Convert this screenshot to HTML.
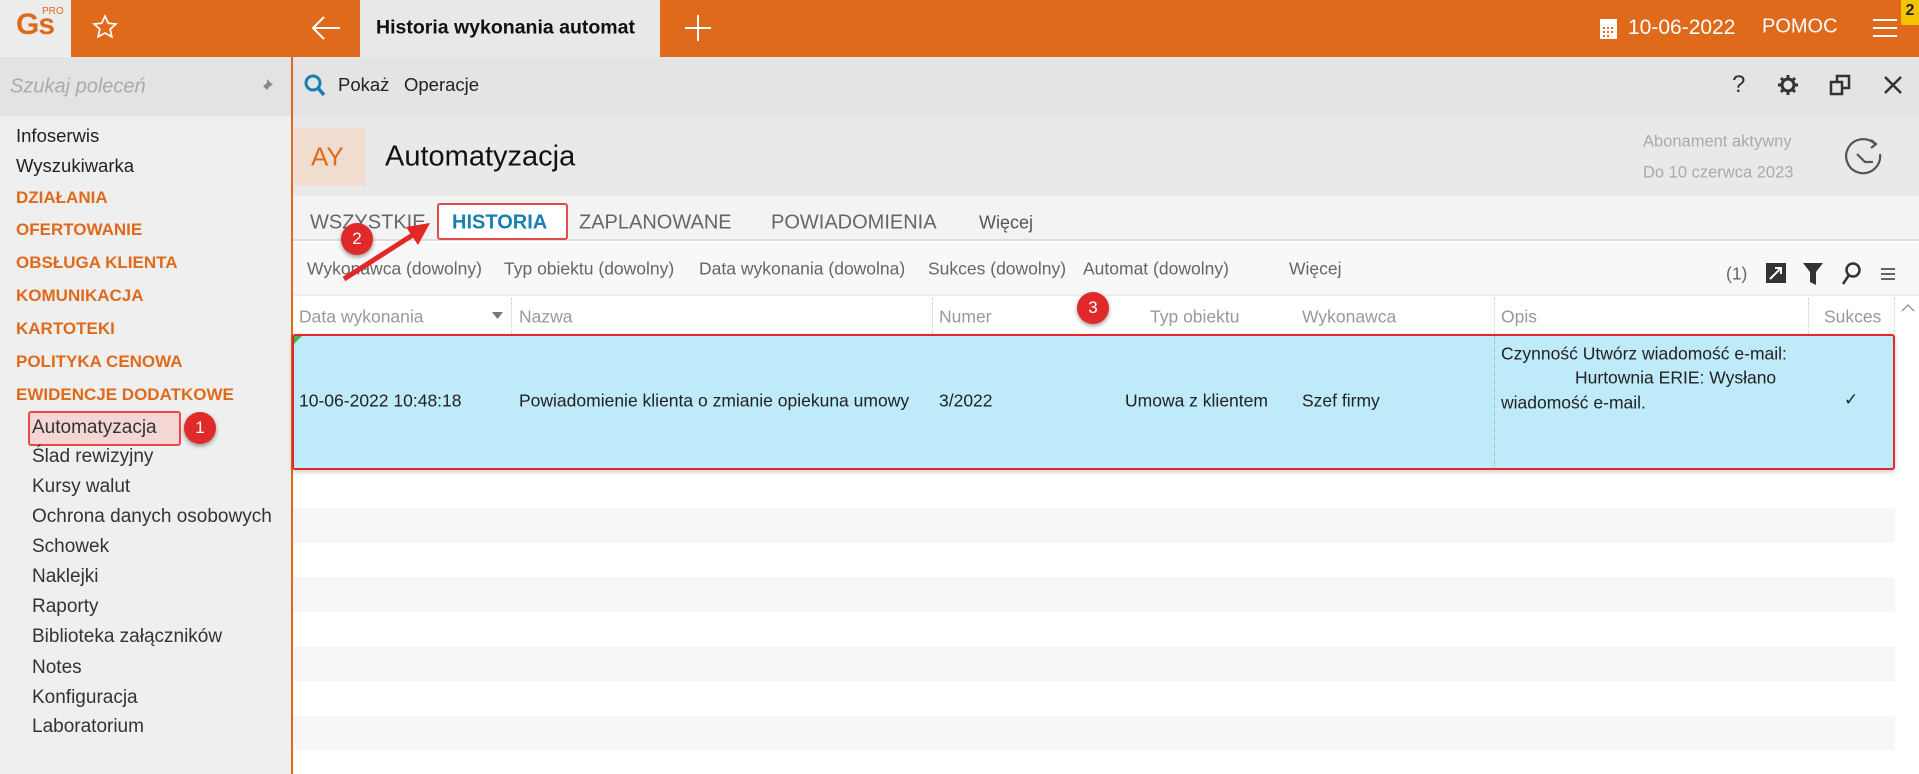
<!DOCTYPE html>
<html><head><meta charset="utf-8"><style>
*{margin:0;padding:0;box-sizing:border-box}
body{width:1919px;height:774px;overflow:hidden;position:relative;font-family:"Liberation Sans",sans-serif;background:#fff;color:#222}
.a{position:absolute;white-space:nowrap}
.t{transform:translateY(-50%)}
.side{font-size:18.5px;left:16px}
.or{color:#e06a1b;font-weight:bold}
.sub{left:32px;font-size:19px;color:#333}
.fl{font-size:17.5px;color:#666}
.th{font-size:17.5px;color:#999}
.badge{position:absolute;width:32px;height:32px;border-radius:50%;background:#e02a2a;color:#fff;font-size:17px;text-align:center;line-height:32px;box-shadow:0 2px 4px rgba(0,0,0,.4)}
</style></head><body>
<div class="a" style="left:0;top:0;width:71px;height:57px;background:#ececec"></div>
<div class="a" style="left:16px;top:8px;font-size:30px;font-weight:bold;color:#e06a1b;letter-spacing:-1px">Gs</div>
<div class="a" style="left:42px;top:6px;font-size:10px;color:#e06a1b">PRO</div>
<div class="a" style="left:71px;top:0;width:289px;height:57px;background:#e06a1b"></div>
<div class="a" style="left:360px;top:0;width:300px;height:57px;background:#e8e8e8"></div>
<div class="a" style="left:660px;top:0;width:1259px;height:57px;background:#e06a1b"></div>
<svg class="a" style="left:92px;top:14px" width="26" height="26" viewBox="0 0 24 24"><path d="M12 2l3 6.5 7 .8-5.2 4.8 1.5 7L12 17.5 5.7 21l1.5-7L2 9.3l7-.8z" fill="none" stroke="#fff" stroke-width="1.6"/></svg>
<svg class="a" style="left:310px;top:14px" width="32" height="28" viewBox="0 0 32 28"><path d="M30 14H3M14 3L3 14l11 11" fill="none" stroke="#fff" stroke-width="2"/></svg>
<div class="a t" style="left:376px;top:28px;font-size:19.5px;font-weight:bold;color:#111">Historia wykonania automat</div>
<svg class="a" style="left:685px;top:15px" width="26" height="26"><path d="M13 0v26M0 13h26" stroke="#fff" stroke-width="2"/></svg>
<svg class="a" style="left:1600px;top:19px" width="17" height="20"><rect x="0" y="2" width="17" height="18" fill="#fff"/><rect x="0" y="0" width="17" height="5" fill="#fff"/><g fill="#e06a1b"><rect x="3" y="8" width="2" height="2"/><rect x="7" y="8" width="2" height="2"/><rect x="11" y="8" width="2" height="2"/><rect x="3" y="12" width="2" height="2"/><rect x="7" y="12" width="2" height="2"/><rect x="11" y="12" width="2" height="2"/><rect x="3" y="16" width="2" height="2"/><rect x="7" y="16" width="2" height="2"/></g></svg>
<div class="a t" style="left:1628px;top:28px;font-size:21px;color:#fff">10-06-2022</div>
<div class="a t" style="left:1762px;top:27px;font-size:20px;color:#fff">POMOC</div>
<svg class="a" style="left:1873px;top:18px" width="24" height="20"><path d="M0 2h24M0 10h24M0 18h24" stroke="#fff" stroke-width="2"/></svg>
<div class="a" style="left:1901px;top:0;width:18px;height:25px;background:#f5c400;font-size:16px;font-weight:bold;text-align:center;line-height:22px">2</div>
<div class="a" style="left:0;top:57px;width:291px;height:717px;background:#efefef"></div>
<div class="a" style="left:0;top:57px;width:291px;height:59px;background:#e3e3e3"></div>
<div class="a t" style="left:10px;top:87px;font-size:20px;font-style:italic;color:#aaa">Szukaj poleceń</div>
<svg class="a" style="left:258px;top:78px" width="16" height="18" viewBox="0 0 16 18"><path d="M9 1l6 6-3 1-3 4-2-2-5 6 5-6-2-2 4-3z" fill="#888"/></svg>
<div class="a" style="left:291px;top:57px;width:2px;height:717px;background:#e06a1b"></div>
<div class="a t side" style="top:136px">Infoserwis</div>
<div class="a t side" style="top:166px">Wyszukiwarka</div>
<div class="a t side or" style="top:198px;font-size:17px">DZIAŁANIA</div>
<div class="a t side or" style="top:230px;font-size:17px">OFERTOWANIE</div>
<div class="a t side or" style="top:263px;font-size:17px">OBSŁUGA KLIENTA</div>
<div class="a t side or" style="top:296px;font-size:17px">KOMUNIKACJA</div>
<div class="a t side or" style="top:329px;font-size:17px">KARTOTEKI</div>
<div class="a t side or" style="top:362px;font-size:17px">POLITYKA CENOWA</div>
<div class="a t side or" style="top:395px;font-size:17px">EWIDENCJE DODATKOWE</div>
<div class="a" style="left:28px;top:411px;width:153px;height:35px;background:#f4d6d4;border:2px solid #e34a4a;border-radius:3px"></div>
<div class="a t sub" style="top:428px">Automatyzacja</div>
<div class="a t sub" style="top:457px">Ślad rewizyjny</div>
<div class="a t sub" style="top:487px">Kursy walut</div>
<div class="a t sub" style="top:517px">Ochrona danych osobowych</div>
<div class="a t sub" style="top:547px">Schowek</div>
<div class="a t sub" style="top:577px">Naklejki</div>
<div class="a t sub" style="top:607px">Raporty</div>
<div class="a t sub" style="top:637px">Biblioteka załączników</div>
<div class="a t sub" style="top:668px">Notes</div>
<div class="a t sub" style="top:698px">Konfiguracja</div>
<div class="a t sub" style="top:727px">Laboratorium</div>
<div class="badge" style="left:184px;top:412px">1</div>
<div class="a" style="left:293px;top:57px;width:1626px;height:59px;background:#e4e4e4"></div>
<svg class="a" style="left:304px;top:74px" width="22" height="24"><circle cx="9" cy="9" r="7" fill="none" stroke="#1a7fb0" stroke-width="3"/><path d="M14 14l6 7" stroke="#1a7fb0" stroke-width="3.5"/></svg>
<div class="a t" style="left:338px;top:85px;font-size:18.5px">Pokaż</div>
<div class="a t" style="left:404px;top:85px;font-size:18.5px">Operacje</div>
<div class="a t" style="left:1732px;top:85px;font-size:24px;color:#333">?</div>
<svg class="a" style="left:1777px;top:74px" width="22" height="22" viewBox="0 0 22 22"><circle cx="11" cy="11" r="6" fill="none" stroke="#333" stroke-width="3"/><path d="M11 1v5M11 16v5M1 11h5M16 11h5M4 4l3.5 3.5M14.5 14.5L18 18M4 18l3.5-3.5M14.5 7.5L18 4" stroke="#333" stroke-width="3"/></svg>
<svg class="a" style="left:1829px;top:74px" width="22" height="22"><rect x="2" y="8" width="11" height="12" fill="none" stroke="#333" stroke-width="2.5"/><path d="M8 8V2h12v12h-7" fill="none" stroke="#333" stroke-width="2.5"/></svg>
<svg class="a" style="left:1883px;top:75px" width="20" height="20"><path d="M2 2l16 16M18 2L2 18" stroke="#333" stroke-width="2.5"/></svg>
<div class="a" style="left:293px;top:116px;width:1626px;height:80px;background:#e9e9e9"></div>
<div class="a" style="left:294px;top:128px;width:71px;height:58px;background:#f1ddd0"></div>
<div class="a t" style="left:311px;top:157px;font-size:26px;color:#e06a1b">AY</div>
<div class="a t" style="left:385px;top:157px;font-size:29px;color:#111">Automatyzacja</div>
<div class="a t" style="left:1643px;top:142px;font-size:16.5px;color:#aaa">Abonament aktywny</div>
<div class="a t" style="left:1643px;top:173px;font-size:16.5px;color:#aaa">Do 10 czerwca 2023</div>
<svg class="a" style="left:1843px;top:136px" width="42" height="42" viewBox="0 0 42 42"><path d="M32 8A17 17 0 1 0 37 18" fill="none" stroke="#555" stroke-width="2.2"/><path d="M28 4l5 4-5 4" fill="none" stroke="#555" stroke-width="2.2"/><path d="M14 18l8 8h8" fill="none" stroke="#555" stroke-width="2.2"/></svg>
<div class="a" style="left:293px;top:196px;width:1626px;height:45px;background:#f3f3f3;border-bottom:2px solid #dcdcdc"></div>
<div class="a t" style="left:310px;top:223px;font-size:20px;color:#666">WSZYSTKIE</div>
<div class="a" style="left:437px;top:203px;width:131px;height:37px;border:2px solid #e34a4a;border-radius:3px;background:#fff"></div>
<div class="a t" style="left:452px;top:223px;font-size:20px;font-weight:bold;color:#1a7fb0">HISTORIA</div>
<div class="a t" style="left:579px;top:223px;font-size:20px;color:#666">ZAPLANOWANE</div>
<div class="a t" style="left:771px;top:223px;font-size:20px;color:#666">POWIADOMIENIA</div>
<div class="a t" style="left:979px;top:223px;font-size:18px;color:#555">Więcej</div>
<div class="a" style="left:293px;top:243px;width:1626px;height:53px;background:#f8f8f8;border-bottom:2px solid #eee"></div>
<div class="a t fl" style="left:307px;top:269px">Wykonawca (dowolny)</div>
<div class="a t fl" style="left:504px;top:269px">Typ obiektu (dowolny)</div>
<div class="a t fl" style="left:699px;top:269px">Data wykonania (dowolna)</div>
<div class="a t fl" style="left:928px;top:269px">Sukces (dowolny)</div>
<div class="a t fl" style="left:1083px;top:269px">Automat (dowolny)</div>
<div class="a t fl" style="left:1289px;top:269px">Więcej</div>
<div class="a t fl" style="left:1726px;top:274px">(1)</div>
<svg class="a" style="left:1766px;top:263px" width="20" height="20"><rect width="20" height="20" fill="#333"/><path d="M4 16L15 5M9 5h6v6" stroke="#fff" stroke-width="2" fill="none"/></svg>
<svg class="a" style="left:1803px;top:263px" width="20" height="22"><path d="M0 0h20l-7 9v13l-6-3V9z" fill="#333"/></svg>
<svg class="a" style="left:1841px;top:262px" width="20" height="24"><circle cx="12" cy="8" r="6.5" fill="none" stroke="#333" stroke-width="2.5"/><path d="M8 13l-6 9" stroke="#333" stroke-width="2.5"/></svg>
<svg class="a" style="left:1881px;top:268px" width="14" height="12"><path d="M0 1h14M0 6h14M0 11h14" stroke="#333" stroke-width="1.6"/></svg>
<div class="a th t" style="left:299px;top:317px">Data wykonania</div>
<svg class="a" style="left:492px;top:312px" width="11" height="8"><path d="M0 0h11L5.5 7z" fill="#777"/></svg>
<div class="a" style="left:511px;top:298px;height:36px;border-left:1px dotted #ccc"></div>
<div class="a th t" style="left:519px;top:317px">Nazwa</div>
<div class="a" style="left:932px;top:298px;height:36px;border-left:1px dotted #ccc"></div>
<div class="a th t" style="left:939px;top:317px">Numer</div>
<div class="a th t" style="left:1150px;top:317px">Typ obiektu</div>
<div class="a th t" style="left:1302px;top:317px">Wykonawca</div>
<div class="a" style="left:1494px;top:298px;height:36px;border-left:1px dotted #ccc"></div>
<div class="a th t" style="left:1501px;top:317px">Opis</div>
<div class="a" style="left:1808px;top:298px;height:36px;border-left:1px dotted #ccc"></div>
<div class="a th t" style="left:1824px;top:317px">Sukces</div>
<div class="a" style="left:1894px;top:298px;height:36px;border-left:1px dotted #ccc"></div>
<svg class="a" style="left:1901px;top:304px" width="14" height="8"><path d="M1 7l6-6 6 6" stroke="#999" stroke-width="1.5" fill="none"/></svg>
<div class="a" style="left:293px;top:508px;width:1602px;height:35px;background:#f7f7f7"></div>
<div class="a" style="left:293px;top:577px;width:1602px;height:35px;background:#f7f7f7"></div>
<div class="a" style="left:293px;top:647px;width:1602px;height:34px;background:#f7f7f7"></div>
<div class="a" style="left:293px;top:716px;width:1602px;height:34px;background:#f7f7f7"></div>
<div class="a" style="left:292px;top:334px;width:1603px;height:136px;background:#bfeafa;border:2px solid #e32626;border-radius:3px;box-shadow:0 2px 4px rgba(0,0,0,.2)"></div>
<svg class="a" style="left:294px;top:336px" width="8" height="8"><path d="M0 0h8L0 8z" fill="#4caf50"/></svg>
<div class="a" style="left:1494px;top:336px;height:132px;border-left:1px dotted #aaa"></div>
<div class="a t" style="left:299px;top:401px;font-size:17.5px">10-06-2022 10:48:18</div>
<div class="a t" style="left:519px;top:401px;font-size:17.5px">Powiadomienie klienta o zmianie opiekuna umowy</div>
<div class="a t" style="left:939px;top:401px;font-size:17.5px">3/2022</div>
<div class="a t" style="left:1125px;top:401px;font-size:17.5px">Umowa z klientem</div>
<div class="a t" style="left:1302px;top:401px;font-size:17.5px">Szef firmy</div>
<div class="a t" style="left:1501px;top:354px;font-size:17.5px">Czynność Utwórz wiadomość e-mail:</div>
<div class="a t" style="left:1575px;top:378px;font-size:17.5px">Hurtownia ERIE: Wysłano</div>
<div class="a t" style="left:1501px;top:403px;font-size:17.5px">wiadomość e-mail.</div>
<div class="a t" style="left:1844px;top:400px;font-size:17px">✓</div>
<svg class="a" style="left:330px;top:215px" width="110" height="75"><path d="M14 64L92 14" stroke="#e32626" stroke-width="5"/><path d="M100 8L76 12l12 18z" fill="#e32626"/></svg>
<div class="badge" style="left:341px;top:223px">2</div>
<div class="badge" style="left:1077px;top:292px">3</div>
</body></html>
